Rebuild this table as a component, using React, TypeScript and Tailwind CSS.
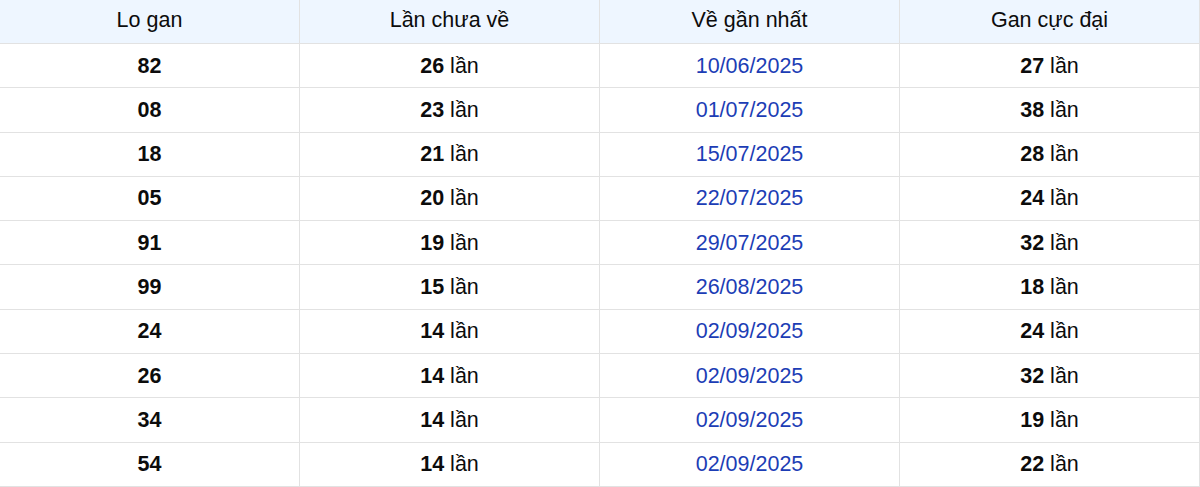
import React from 'react';

const rows = [
  { num: '82', streak: 26, last: '10/06/2025', max: 27 },
  { num: '08', streak: 23, last: '01/07/2025', max: 38 },
  { num: '18', streak: 21, last: '15/07/2025', max: 28 },
  { num: '05', streak: 20, last: '22/07/2025', max: 24 },
  { num: '91', streak: 19, last: '29/07/2025', max: 32 },
  { num: '99', streak: 15, last: '26/08/2025', max: 18 },
  { num: '24', streak: 14, last: '02/09/2025', max: 24 },
  { num: '26', streak: 14, last: '02/09/2025', max: 32 },
  { num: '34', streak: 14, last: '02/09/2025', max: 19 },
  { num: '54', streak: 14, last: '02/09/2025', max: 22 },
];

const headers = ['Lo gan', 'Lần chưa về', 'Về gần nhất', 'Gan cực đại'];

export default function App() {
  return (
    <div className="w-[1200px] bg-white font-['Liberation_Sans',Arial,sans-serif] text-[21.5px] text-[#0c0c0c]">
      <div className="grid grid-cols-4 bg-[#eef6ff] border-b border-[#e2e2e2]">
        {headers.map((h) => (
          <div key={h} className="h-[43px] flex items-center justify-center border-r border-[#e2e2e2] pb-[2px]">
            {h}
          </div>
        ))}
      </div>
      {rows.map((r) => (
        <div key={r.num} className="grid grid-cols-4 border-b border-[#e2e2e2]">
          <div className="h-[43.3px] flex items-center justify-center border-r border-[#e2e2e2] font-bold">
            {r.num}
          </div>
          <div className="h-[43.3px] flex items-center justify-center border-r border-[#e2e2e2]">
            <span className="font-bold">{r.streak}</span>&nbsp;lần
          </div>
          <div className="h-[43.3px] flex items-center justify-center border-r border-[#e2e2e2] text-[#1c3db5]">
            {r.last}
          </div>
          <div className="h-[43.3px] flex items-center justify-center border-r border-[#e2e2e2]">
            <span className="font-bold">{r.max}</span>&nbsp;lần
          </div>
        </div>
      ))}
    </div>
  );
}
